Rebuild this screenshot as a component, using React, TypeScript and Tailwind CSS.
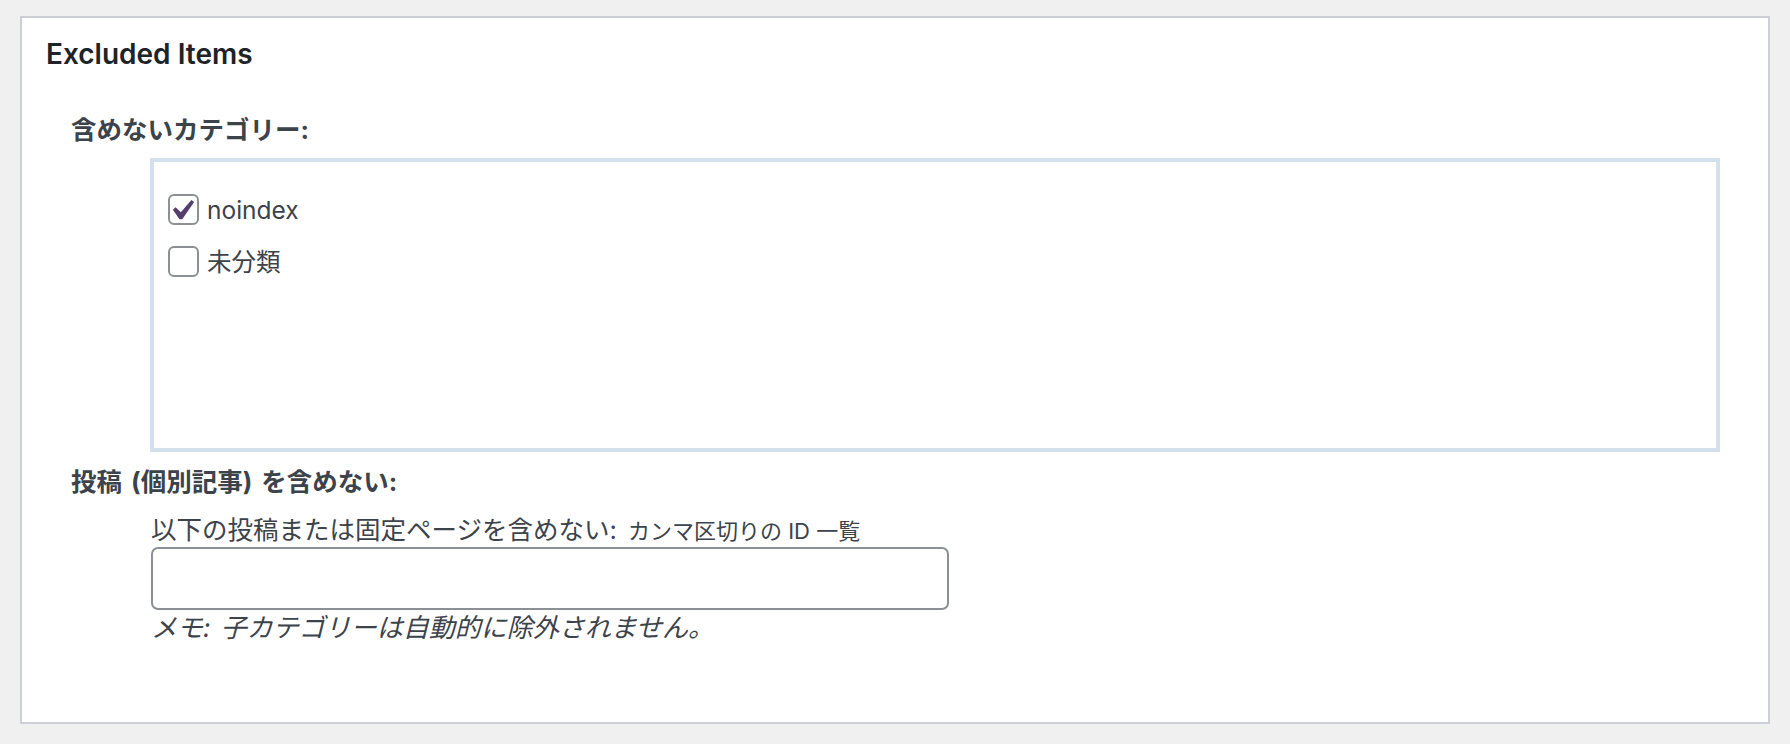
import { useState } from "react";

const font = { fontFamily: '"Inter", "Noto Sans CJK JP", sans-serif' };

function Checkbox({ checked, onToggle }: { checked: boolean; onToggle: () => void }) {
  return (
    <span
      onClick={onToggle}
      className="relative block w-[31px] h-[31px] shrink-0 rounded-[6px] border-2 border-[#8c8f94] bg-white cursor-pointer"
    >
      {checked && (
        <svg viewBox="0 0 20 20" className="absolute left-[-9px] top-[-6px] w-[41px] h-[41px]">
          <path d="M14.83 4.89l1.34.94-5.81 8.38H9.02L5.78 9.67l1.34-1.25 2.57 2.4z" fill="#523f6d" />
        </svg>
      )}
    </span>
  );
}

export default function App() {
  const [cats, setCats] = useState([
    { id: "noindex", label: "noindex", checked: true },
    { id: "uncategorized", label: "未分類", checked: false },
  ]);
  const [ids, setIds] = useState("");

  function toggle(id: string) {
    setCats((cs) => cs.map((c) => (c.id === id ? { ...c, checked: !c.checked } : c)));
  }

  return (
    <div className="min-h-screen bg-[#f0f0f1] pl-[20px] pr-[20px] pt-[16px] pb-[20px]" style={font}>
      <div className="h-[708px] border-2 border-[#ccd0d4] bg-white">
        <h2 className="mt-[18px] pl-[24px] text-[28px] leading-[36px] font-semibold text-[#1d2327]">Excluded Items</h2>

        <div className="pl-[49px] pr-[48px]">
          <div className="mt-[42px] text-[25.5px] leading-[32px] font-bold text-[#3c434a]">含めないカテゴリー:</div>

          <div className="ml-[79px] mt-[12px] h-[294px] border-4 border-[#d3e0ed] bg-white pt-[32px] pl-[14px]">
            <div className="flex flex-col gap-[21px]">
              {cats.map((c) => (
                <label key={c.id} className="flex items-center gap-[8px] text-[24.5px] leading-[30px] text-[#3c434a]">
                  <Checkbox checked={c.checked} onToggle={() => toggle(c.id)} />
                  <span>{c.label}</span>
                </label>
              ))}
            </div>
          </div>

          <div className="mt-[14px] text-[25.5px] leading-[32px] font-bold text-[#3c434a] [word-spacing:3px]">
            投稿 (個別記事) を含めない:
          </div>

          <div className="ml-[80px]">
            <div className="mt-[17px] text-[25.5px] leading-[30px] text-[#3c434a]">
              以下の投稿または固定ページを含めない:{" "}
              <span className="ml-[4px] text-[22px]">カンマ区切りの ID 一覧</span>
            </div>
            <input
              value={ids}
              onChange={(e) => setIds(e.target.value)}
              className="mt-[1px] block w-[798px] h-[63px] rounded-[7px] border-2 border-[#8c8f94] bg-white px-3 text-[24.5px] text-[#2c3338] outline-none"
            />
            <div className="mt-[3px] text-[26px] leading-[30px] italic text-[#3c434a] [word-spacing:3px]">
              メモ: 子カテゴリーは自動的に除外されません。
            </div>
          </div>
        </div>
      </div>
    </div>
  );
}
